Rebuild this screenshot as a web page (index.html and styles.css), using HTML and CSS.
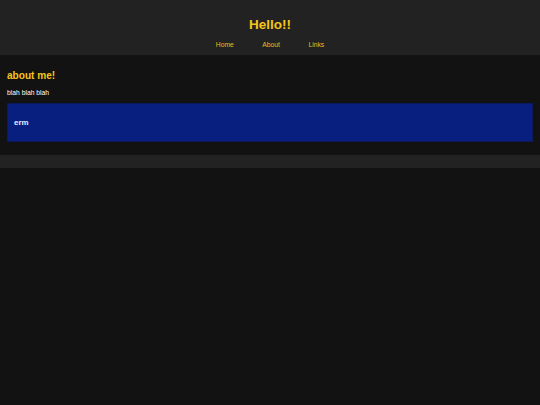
FILE: index.html
```html
<!DOCTYPE html>
<html lang="en">
<head>
<meta charset="utf-8">
<title>Hello!!</title>
<link rel="stylesheet" href="styles.css">
</head>
<body>
<header class="site-header">
  <h1 class="site-title">Hello!!</h1>
  <nav class="site-nav">
    <a class="nav-link" href="#">Home</a>
    <a class="nav-link" href="#">About</a>
    <a class="nav-link" href="#">Links</a>
  </nav>
</header>
<main class="content">
  <h2 class="section-title">about me!</h2>
  <p class="section-text">blah blah blah</p>
  <div class="card">
    <h3 class="card-title">erm</h3>
  </div>
</main>
<footer class="site-footer"></footer>
</body>
</html>
```

FILE: styles.css
```css
html, body {
  margin: 0;
  padding: 0;
}
body {
  background: #121212;
  color: #ffffff;
  font-family: "Liberation Sans", Arial, sans-serif;
  font-size: 6.75px;
  min-height: 405px;
}
.site-header {
  background: #222222;
  display: flex;
  flex-direction: column;
  align-items: center;
  padding: 17px 0 7.4px;
}
.site-title {
  margin: 0 0 8.5px;
  font-size: 13.5px;
  font-weight: bold;
  color: #f5c518;
}
.site-nav {
  display: flex;
  gap: 28.5px;
}
.nav-link {
  color: #e8bb1e;
  text-decoration: none;
}
.content {
  padding: 15.6px 7px 13.2px;
}
.section-title {
  margin: 0 0 8px;
  font-size: 10.1px;
  color: #f5c518;
}
.section-text {
  margin: 0 0 7px;
}
.card {
  background: #081f7f;
  border: 1px solid #0a1a5a;
  padding: 13.8px 6px;
}
.card-title {
  margin: 0;
  font-size: 7.9px;
  color: #e8ecff;
}
.site-footer {
  background: #222222;
  height: 13px;
}
```
